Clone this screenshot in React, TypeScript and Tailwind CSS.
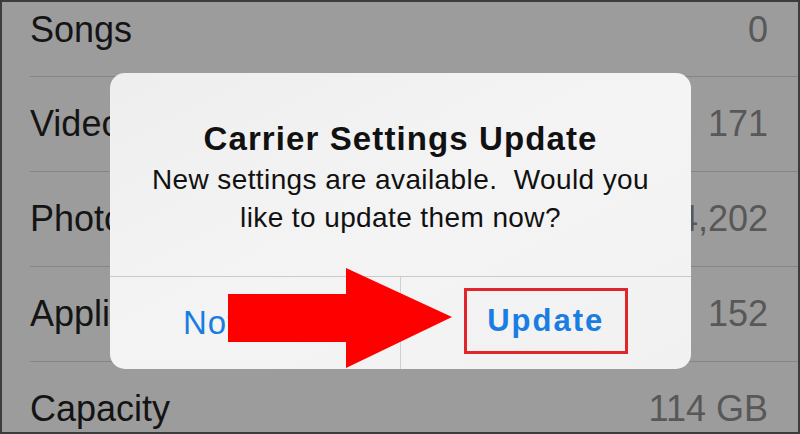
const rows = [
  { label: "Songs", value: "0" },
  { label: "Videos", value: "171" },
  { label: "Photos", value: "4,202" },
  { label: "Applications", value: "152" },
  { label: "Capacity", value: "114 GB" },
]

function Arrow() {
  return (
    <svg
      className="absolute left-[226px] top-[266px]"
      width="224"
      height="100"
      viewBox="0 0 224 100"
    >
      <polygon points="0,26 118,26 118,0 224,49 118,100 118,74 0,74" fill="#ff0000" />
    </svg>
  )
}

export default function App() {
  return (
    <div
      className="relative w-[800px] h-[434px] overflow-hidden border-2 border-[#3c3c3c] bg-[#9c9c9c]"
      style={{ fontFamily: '"Liberation Sans", Arial, sans-serif' }}
    >
      <div className="flex flex-col">
        {rows.map((row, i) => (
          <div
            key={row.label}
            className={
              i === 0
                ? "ml-[28px] pr-[30px] h-[74px] pb-[19px] flex items-center justify-between shrink-0"
                : "ml-[28px] pr-[30px] h-[95px] border-t border-[#858585] flex items-center justify-between shrink-0"
            }
          >
            <span className="text-[36px] text-[#141414]">{row.label}</span>
            <span className="text-[36px] text-[#585858]">{row.value}</span>
          </div>
        ))}
      </div>

      <div className="absolute left-[108px] top-[71px] w-[581px] h-[296px] rounded-[15px] bg-gradient-to-br from-[#eeeeee] via-[#f4f4f4] to-[#f1f1f1] flex flex-col">
        <div className="pt-[47px] px-4 text-center text-[#111]">
          <h1 className="text-[33px] leading-[38px] font-bold tracking-[1.1px]">
            Carrier Settings Update
          </h1>
          <p className="mt-[3px] text-[28px] leading-[38px] tracking-[0.4px] whitespace-pre">
            {"New settings are available.  Would you\nlike to update them now?"}
          </p>
        </div>
        <div className="mt-auto h-[93px] border-t border-[#cacaca] grid grid-cols-2">
          <div className="flex items-center justify-center pr-[10px] border-r border-[#cfcfcf]">
            <span className="text-[33px] tracking-[1px] text-[#1a7de3]">Not Now</span>
          </div>
          <div className="flex items-center justify-center pb-[4px]">
            <span className="border-[3px] border-[#e0262b] w-[164px] h-[66px] flex items-center justify-center text-[31px] font-bold tracking-[2px] text-[#1a7de3]">
              Update
            </span>
          </div>
        </div>
      </div>

      <Arrow />
    </div>
  )
}
